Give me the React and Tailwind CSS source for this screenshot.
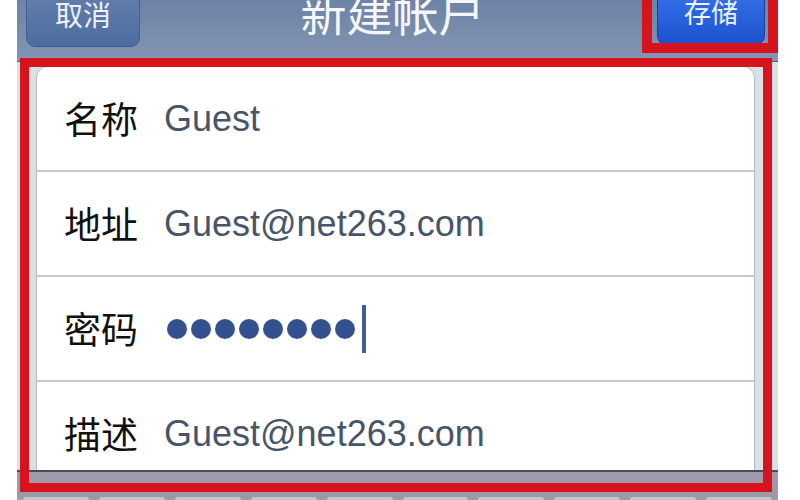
const cjk = { fontFamily: '"Noto Sans CJK SC", "Liberation Sans", sans-serif' };
const latin = { fontFamily: '"Liberation Sans", "Noto Sans CJK SC", sans-serif' };

const rows = [
  { label: '名称', value: 'Guest' },
  { label: '地址', value: 'Guest@net263.com' },
  { label: '密码', password: 8 },
  { label: '描述', value: 'Guest@net263.com' },
];

const Row = ({ row }) => (
  <div className="flex items-center h-[105px] shrink-0 border-b-2 border-[#c9c9cc] pl-[27px]">
    <span className="w-[100px] text-[37px] leading-none text-[#111]" style={cjk}>
      {row.label}
    </span>
    {row.password ? (
      <div className="flex items-center gap-[4px] pl-[3px]">
        {Array.from({ length: row.password }).map((_, i) => (
          <span key={i} className="w-[20px] h-[20px] rounded-full bg-[#34508e]" />
        ))}
        <span className="ml-[3px] w-[4px] h-[48px] bg-[#3d5d9e]" />
      </div>
    ) : (
      <span className="text-[36px] leading-none text-[#475469]" style={latin}>
        {row.value}
      </span>
    )}
  </div>
);

const App = () => {
  return (
    <div className="relative w-[800px] h-[500px] bg-white overflow-hidden flex">
      <div className="ml-[17px] w-[761px] h-full flex flex-col">
        {/* nav bar */}
        <div className="h-[62px] shrink-0 flex items-start bg-gradient-to-b from-[#6d83a5] to-[#8395b3] border-b border-[#4e5f78] px-[9px]">
          <div
            className="-mt-[20px] w-[114px] h-[67px] rounded-[9px] border border-[#43618f] bg-gradient-to-b from-[#6783b0] to-[#4e6c9e] flex items-center justify-center text-[28px] text-[#eef2f8]"
            style={cjk}
          >
            取消
          </div>
          <div
            className="flex-1 -mt-[12px] text-center text-[46px] leading-[46px] text-[#f4f6fa] pr-[12px]"
            style={cjk}
          >
            新建帐户
          </div>
          <div
            className="-mt-[20px] mr-[4px] w-[108px] h-[65px] rounded-[9px] border border-[#1c3f9c] bg-gradient-to-b from-[#3c78ec] to-[#1c52d0] flex items-center justify-center text-[27px] text-[#eef3fc]"
            style={cjk}
          >
            存储
          </div>
        </div>

        {/* form area */}
        <div className="flex-1 min-h-0 bg-[#dcdfe5] pt-[4px] pl-[19px] pr-[23px] overflow-hidden">
          <div className="bg-white rounded-t-[12px] border border-[#b8bcc4] flex flex-col h-[420px] overflow-hidden">
            {rows.map((row) => (
              <Row key={row.label} row={row} />
            ))}
          </div>
        </div>

        {/* keyboard accessory bar */}
        <div className="h-[23px] shrink-0 border-t-2 border-[#4a4c55] bg-[#9e99ab]" />
        <div className="h-[7px] shrink-0 bg-[#9a9ca5] flex items-end gap-[10px] px-[6px]">
          {Array.from({ length: 10 }).map((_, i) => (
            <span key={i} className="flex-1 h-[3px] rounded-t-[4px] bg-[#c4c5cb]" />
          ))}
        </div>
      </div>

      {/* red highlight annotations */}
      <div className="absolute left-[20px] top-[58px] w-[752px] h-[434px] border-[9px] border-[#d7141d] pointer-events-none" />
      <div className="absolute left-[642px] -top-[10px] w-[136px] h-[63px] border-[10px] border-[#d7141d] pointer-events-none" />
    </div>
  );
};

export default App;
